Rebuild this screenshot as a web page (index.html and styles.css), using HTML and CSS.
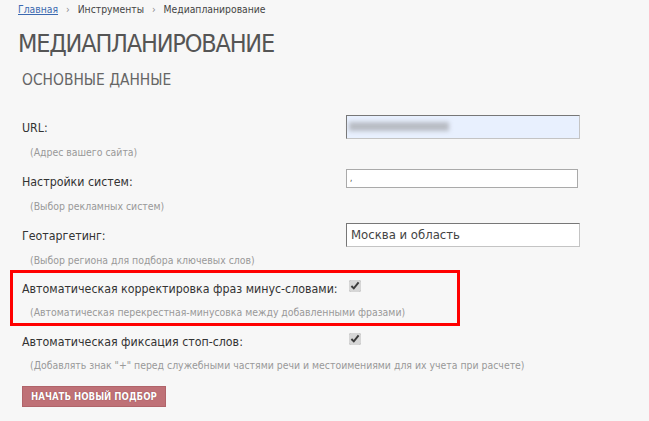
FILE: index.html
```html
<!DOCTYPE html>
<html lang="ru">
<head>
    <meta charset="UTF-8">
    <title>Медиапланирование</title>
    <link rel="stylesheet" href="styles.css">
</head>
<body>

    <div class="crumbs">
        <a href="#">Главная</a>
        <span class="sep">&rsaquo;</span>
        <span>Инструменты</span>
        <span class="sep">&rsaquo;</span>
        <span>Медиапланирование</span>
    </div>

    <h1>Медиапланирование</h1>
    <h2>Основные данные</h2>

    <form class="form">
        <div class="row">
            <div class="info">
                <label>URL:</label>
                <p class="hint">(Адрес вашего сайта)</p>
            </div>
            <div class="field">
                <div class="input autofill"><span class="blur"></span></div>
            </div>
        </div>

        <div class="row">
            <div class="info">
                <label>Настройки систем:</label>
                <p class="hint">(Выбор рекламных систем)</p>
            </div>
            <div class="field">
                <div class="input small">,</div>
            </div>
        </div>

        <div class="row">
            <div class="info">
                <label>Геотаргетинг:</label>
                <p class="hint">(Выбор региона для подбора ключевых слов)</p>
            </div>
            <div class="field">
                <div class="input">Москва и область</div>
            </div>
        </div>

        <div class="row check marked">
            <div class="info">
                <label>Автоматическая корректировка фраз минус-словами:</label>
                <p class="hint">(Автоматическая перекрестная-минусовка между добавленными фразами)</p>
            </div>
            <div class="field">
                <input type="checkbox" checked>
            </div>
        </div>

        <div class="row check">
            <div class="info">
                <label>Автоматическая фиксация стоп-слов:</label>
                <p class="hint">(Добавлять знак "+" перед служебными частями речи и местоимениями для их учета при расчете)</p>
            </div>
            <div class="field">
                <input type="checkbox" checked>
            </div>
        </div>

        <button type="button" class="start">Начать новый подбор</button>
    </form>

</body>
</html>
```

FILE: styles.css
```css
body {
    margin: 0;
    padding: 3px 18px 0;
    background-color: #f7f7f7;
    font-family: "DejaVu Sans Condensed", "DejaVu Sans", sans-serif;
    color: #333;
}
.crumbs {
    font-size: 10.3px;
    color: #444;
    height: 14px;
}
.crumbs a {
    color: #3b69b0;
}
.crumbs .sep {
    color: #888;
    margin: 0 5px;
}
h1 {
    margin: 12px 0 0;
    font-size: 25px;
    font-weight: normal;
    text-transform: uppercase;
    color: #555;
    letter-spacing: -1.2px;
    line-height: 30px;
}
h2 {
    margin: 12px 0 0 4px;
    font-size: 15.4px;
    font-weight: normal;
    text-transform: uppercase;
    color: #666;
    line-height: 18px;
}
.form {
    margin-top: 26px;
    padding-left: 4px;
}
.row {
    display: grid;
    grid-template-columns: 324px 240px;
    height: 54px;
    position: relative;
}
.info label {
    display: block;
    font-size: 12.3px;
    color: #333;
    line-height: 16px;
    padding-top: 5px;
    white-space: nowrap;
}
.hint {
    margin: 10px 0 0 8px;
    font-size: 10.4px;
    color: #999;
    white-space: nowrap;
}
.input {
    box-sizing: border-box;
    width: 234px;
    height: 24px;
    background: #fff;
    border: 1px solid #c4c4c4;
    border-top-color: #777;
    border-left-color: #777;
    font-size: 13px;
    color: #444;
    padding: 3px 4px;
}
.input.small {
    width: 232px;
    height: 19px;
    border-color: #aaa;
    font-size: 8px;
    padding: 4px 3px 0;
    margin-top: 0;
}
.input.autofill {
    background: #e8f0fe;
    padding: 6px 2px;
}
.blur {
    display: block;
    width: 100px;
    height: 9px;
    background: #b8bcc4;
    filter: blur(2px);
}
.check {
    height: 53px;
}
.check .info label {
    padding-top: 4px;
}
.check .hint {
    margin-top: 9px;
}
.check input {
    margin: 2px 0 0 3px;
    width: 12px;
    height: 12px;
    accent-color: #d6d6d6;
}
.marked::before {
    content: "";
    position: absolute;
    left: -12px;
    top: -7px;
    width: 444px;
    height: 50px;
    border: 3px solid #f00;
}
.start {
    margin-top: 3px;
    padding: 0 8px;
    height: 21px;
    background-color: #bf7177;
    border: 1px solid #b0646a;
    color: #fff;
    font-family: "DejaVu Sans Condensed", "DejaVu Sans", sans-serif;
    font-size: 9.6px;
    font-weight: bold;
    text-transform: uppercase;
    text-shadow: 0 0 1px #7a3a3f;
}
```
